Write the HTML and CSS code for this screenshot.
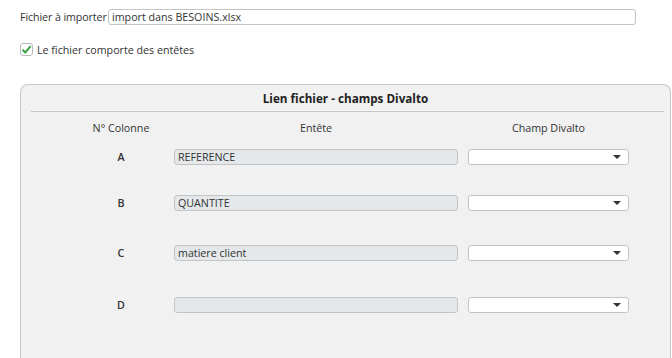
FILE: index.html
```html
<!DOCTYPE html>
<html lang="fr">
<head>
    <meta charset="UTF-8">
    <title>Import fichier</title>
    <link rel="stylesheet" href="styles.css">
</head>
<body>
    <div class="page">
        <!-- Fichier -->
        <div class="file-row">
            <label for="fichier">Fichier à importer</label>
            <input type="text" id="fichier" class="file-input" value="import dans BESOINS.xlsx">
        </div>

        <!-- Entetes -->
        <div class="check-row">
            <span class="check-box">
                <svg width="11" height="11" viewBox="0 0 11 11"><path d="M1.5 5.8 L4.3 8.5 L9.6 2.2" fill="none" stroke="#3aa346" stroke-width="2"/></svg>
            </span>
            <span>Le fichier comporte des entêtes</span>
        </div>

        <!-- Lien fichier -->
        <div class="panel">
            <div class="panel-title">Lien fichier - champs Divalto</div>
            <div class="panel-sep"></div>
            <div class="map-grid">
                <div class="head">N° Colonne</div>
                <div class="head head-mid">Entête</div>
                <div class="head head-last">Champ Divalto</div>

                <div class="col-letter">A</div>
                <input type="text" class="head-input" value="REFERENCE" readonly>
                <div class="select-wrap"><select></select></div>

                <div class="col-letter">B</div>
                <input type="text" class="head-input" value="QUANTITE" readonly>
                <div class="select-wrap"><select></select></div>

                <div class="col-letter">C</div>
                <input type="text" class="head-input" value="matiere client" readonly>
                <div class="select-wrap"><select></select></div>

                <div class="col-letter">D</div>
                <input type="text" class="head-input" value="" readonly>
                <div class="select-wrap"><select></select></div>
            </div>
        </div>
    </div>
</body>
</html>
```

FILE: styles.css
```css
* {
    margin: 0;
    padding: 0;
    box-sizing: border-box;
}

body {
    background: #fff;
    font-family: 'Open Sans', 'Noto Sans', sans-serif;
    font-size: 10.7px;
    color: #333;
    overflow: hidden;
}

.page {
    padding: 9px 0 0 20px;
}

/* Ligne fichier */
.file-row {
    display: flex;
    align-items: center;
    height: 16px;
}

.file-row label {
    flex: none;
    width: 88px;
    white-space: nowrap;
    letter-spacing: -0.1px;
}

.file-input {
    flex: none;
    width: 528px;
    height: 16px;
    border: 1px solid #c4c4c4;
    border-radius: 3px;
    padding: 0 3px;
    font-family: inherit;
    font-size: 10.7px;
    color: #333;
    background: #fff;
}

/* Case a cocher */
.check-row {
    display: flex;
    align-items: center;
    margin-top: 18px;
    height: 13px;
}

.check-box {
    width: 13px;
    height: 13px;
    border: 1px solid #b8b8b8;
    border-radius: 3px;
    display: flex;
    align-items: center;
    justify-content: center;
    margin-right: 4px;
    background: #fff;
}

/* Panneau */
.panel {
    margin-top: 28px;
    width: 651px;
    height: 274px;
    border: 1px solid #c6c6c6;
    border-bottom: none;
    border-radius: 8px 8px 0 0;
    background: #f1f1f1;
}

.panel-title {
    height: 26px;
    line-height: 26px;
    text-align: center;
    font-weight: bold;
    font-size: 11.7px;
    color: #222;
}

.panel-sep {
    height: 1px;
    background: #c6c6c6;
    margin: 0 6px 0 10px;
}

.map-grid {
    display: grid;
    grid-template-columns: 103px 294px 161px;
    grid-template-rows: 29px 46px 50px 52px 16px;
    padding: 8px 0 0 50px;
}

.head {
    text-align: center;
    line-height: 16px;
    padding-right: 3px;
}

.head-mid {
    padding-right: 10px;
}

.head-last {
    padding-right: 0;
}

.col-letter {
    text-align: center;
    line-height: 16px;
    height: 16px;
    padding-right: 3px;
    font-weight: 600;
}

.head-input {
    width: 284px;
    height: 16px;
    border: 1px solid #c4c4c4;
    border-radius: 3px;
    background: #e4e8ea;
    padding: 0 3px;
    font-family: inherit;
    font-size: 10.7px;
    color: #333;
}

.select-wrap {
    position: relative;
    height: 16px;
}

.select-wrap select {
    appearance: none;
    width: 161px;
    height: 16px;
    border: 1px solid #c4c4c4;
    border-radius: 3px;
    background: #fff;
}

.select-wrap::after {
    content: "";
    position: absolute;
    right: 8px;
    top: 6px;
    border-left: 4px solid transparent;
    border-right: 4px solid transparent;
    border-top: 4px solid #333;
}
```
